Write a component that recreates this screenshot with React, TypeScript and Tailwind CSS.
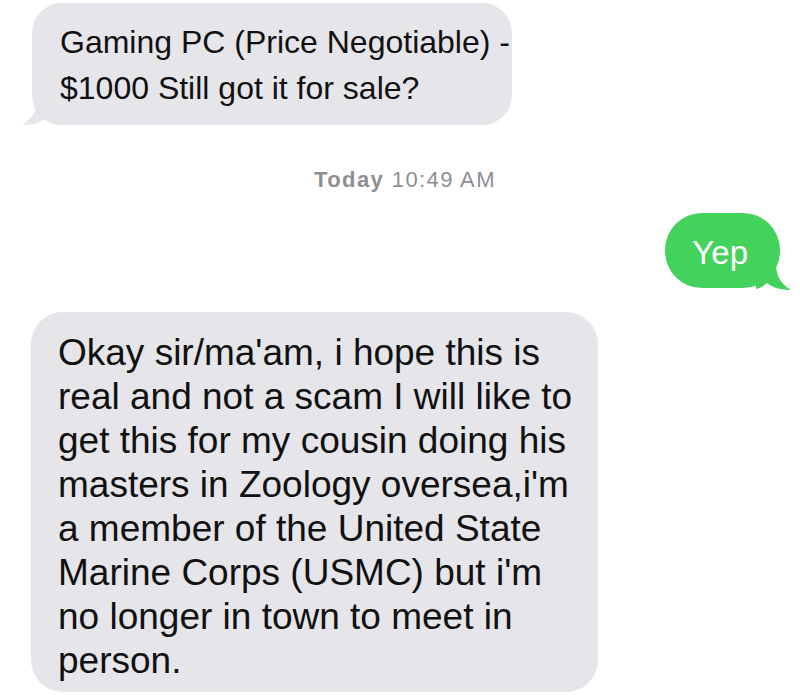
import React from 'react';

const gray = '#e5e5ea';
const green = '#43d25c';

function TailLeft({ color }: { color: string }) {
  return (
    <svg
      className="absolute -left-[11px] bottom-0"
      width="36"
      height="26"
      viewBox="0 0 36 26"
    >
      <path
        d="M16 0 C16 12 11 20 1 26 C10 26 19 24 25 19 C28 22 32 24 36 25 L36 0 Z"
        fill={color}
      />
    </svg>
  );
}

function TailRight({ color }: { color: string }) {
  return (
    <svg
      className="absolute -right-[12px] bottom-[-2px]"
      width="36"
      height="26"
      viewBox="0 0 36 26"
    >
      <path
        d="M20 0 C20 12 25 20 35 26 C26 26 17 24 11 19 C8 22 4 24 0 25 L0 0 Z"
        fill={color}
      />
    </svg>
  );
}

export default function App() {
  const scamLines = [
    "Okay sir/ma'am, i hope this is",
    'real and not a scam I will like to',
    'get this for my cousin doing his',
    "masters in Zoology oversea,i'm",
    'a member of the United State',
    "Marine Corps (USMC) but i'm",
    'no longer in town to meet in',
    'person.',
  ];

  return (
    <div
      className="w-[800px] h-[695px] bg-white flex flex-col overflow-hidden text-[#111]"
      style={{ fontFamily: '"Liberation Sans", Arial, sans-serif' }}
    >
      {/* incoming */}
      <div
        className="relative self-start ml-[32px] mt-[3px] w-[480px] rounded-[30px] pl-[28px] pt-[16px] pb-[14px] text-[32px] leading-[46px]"
        style={{ backgroundColor: gray }}
      >
        <TailLeft color={gray} />
        <div className="relative whitespace-nowrap">Gaming PC (Price Negotiable) -</div>
        <div className="relative whitespace-nowrap">$1000 Still got it for sale?</div>
      </div>

      {/* timestamp */}
      <div className="mt-[42px] pl-[10px] text-center text-[22px] leading-[26px] tracking-[1.4px] text-[#8e8e93]">
        <span className="font-bold">Today</span> 10:49 AM
      </div>

      {/* outgoing */}
      <div
        className="relative self-end mr-[20px] mt-[20px] rounded-[37px] pl-[27px] pr-[32px] pt-[20px] pb-[15px] text-[33px] leading-[40px] text-white"
        style={{ backgroundColor: green }}
      >
        <TailRight color={green} />
        <span className="relative">Yep</span>
      </div>

      {/* incoming */}
      <div
        className="relative self-start ml-[31px] mt-[24px] w-[567px] rounded-[32px] pl-[27px] pt-[19px] pb-[9px] text-[37px] leading-[44px]"
        style={{ backgroundColor: gray }}
      >
        {scamLines.map((line, i) => (
          <div key={i} className="whitespace-nowrap">
            {line}
          </div>
        ))}
      </div>
    </div>
  );
}
